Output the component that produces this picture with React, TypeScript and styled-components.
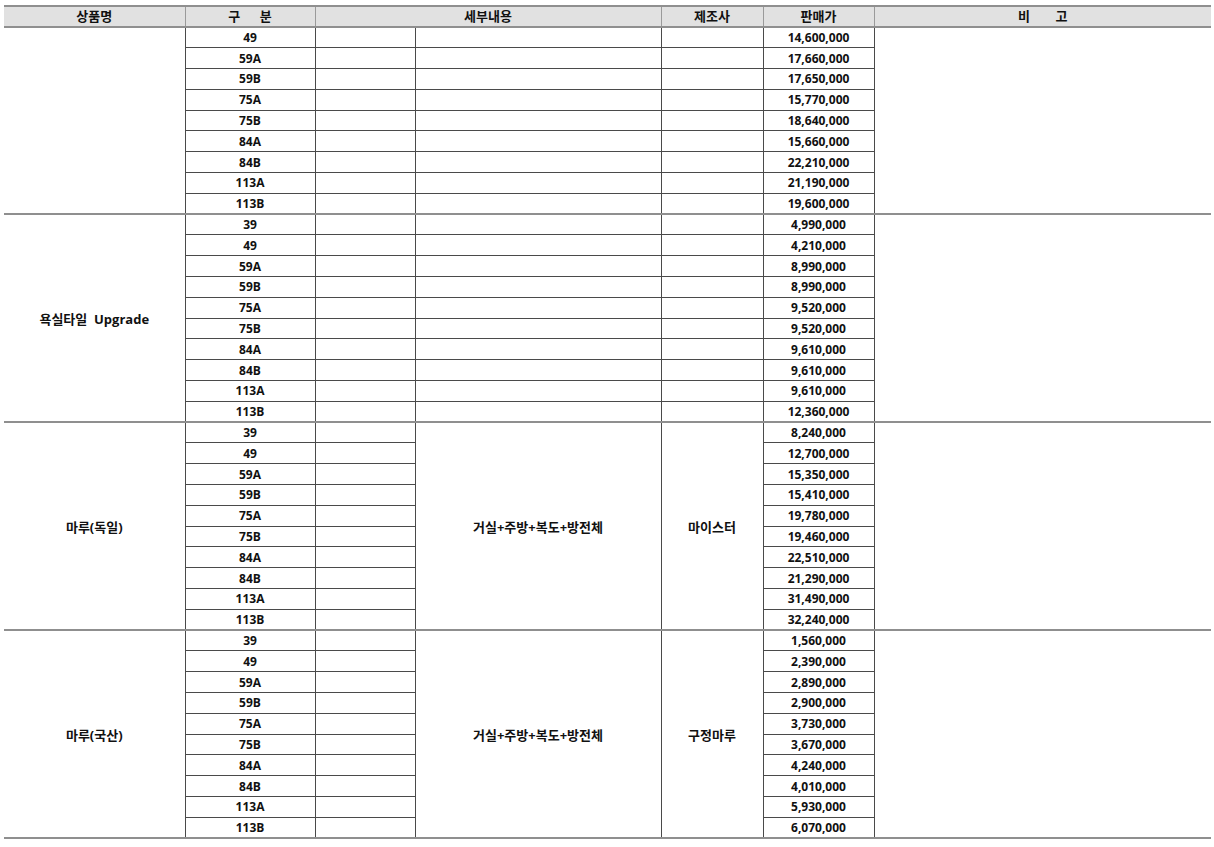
import React from "react";
import styled, { createGlobalStyle } from "styled-components";

const GlobalStyle = createGlobalStyle`
	html, body {
		margin: 0;
		padding: 0;
		background: #fff;
	}
	body {
		font-family: "Open Sans", "Noto Sans CJK KR", sans-serif;
		color: #111;
	}
`;

const Page = styled.div`
	padding: 5px 3px 0 4px;
`;

const PriceTable = styled.table`
	width: 1207px;
	border-collapse: collapse;
	table-layout: fixed;
	font-size: 12px;
	font-weight: 700;
`;

const HeadCell = styled.th<{ $spaced?: number }>`
	height: 19px;
	padding: 0;
	background: #e1e1e1;
	border-top: 2px solid #8f8f8f;
	border-bottom: 2px solid #8f8f8f;
	border-left: 1px solid #9a9a9a;
	font-size: 13px;
	line-height: 1;
	font-weight: 700;
	text-align: center;
	word-spacing: ${(p) => p.$spaced ?? 0}px;
	&:first-child {
		border-left: 0;
	}
`;

const Group = styled.tbody`
	border-bottom: 2px solid #8f8f8f;
`;

const Row = styled.tr`
	height: 20.8px;
`;

const Cell = styled.td<{ $ko?: boolean }>`
	padding: 0;
	text-align: center;
	vertical-align: middle;
	border: 1px solid #4a4a4a;
	white-space: nowrap;
	font-size: ${(p) => (p.$ko ? 13 : 12)}px;
`;

const SideCell = styled(Cell)`
	border-left: 0;
	white-space: pre;
`;

const NoteCell = styled(Cell)`
	border-right: 0;
`;

type Group = {
	name: string;
	detail?: string;
	maker?: string;
	rows: [string, string][];
};

const groups: Group[] = [
	{
		name: "",
		rows: [
			["49", "14,600,000"],
			["59A", "17,660,000"],
			["59B", "17,650,000"],
			["75A", "15,770,000"],
			["75B", "18,640,000"],
			["84A", "15,660,000"],
			["84B", "22,210,000"],
			["113A", "21,190,000"],
			["113B", "19,600,000"],
		],
	},
	{
		name: "욕실타일  Upgrade",
		rows: [
			["39", "4,990,000"],
			["49", "4,210,000"],
			["59A", "8,990,000"],
			["59B", "8,990,000"],
			["75A", "9,520,000"],
			["75B", "9,520,000"],
			["84A", "9,610,000"],
			["84B", "9,610,000"],
			["113A", "9,610,000"],
			["113B", "12,360,000"],
		],
	},
	{
		name: "마루(독일)",
		detail: "거실+주방+복도+방전체",
		maker: "마이스터",
		rows: [
			["39", "8,240,000"],
			["49", "12,700,000"],
			["59A", "15,350,000"],
			["59B", "15,410,000"],
			["75A", "19,780,000"],
			["75B", "19,460,000"],
			["84A", "22,510,000"],
			["84B", "21,290,000"],
			["113A", "31,490,000"],
			["113B", "32,240,000"],
		],
	},
	{
		name: "마루(국산)",
		detail: "거실+주방+복도+방전체",
		maker: "구정마루",
		rows: [
			["39", "1,560,000"],
			["49", "2,390,000"],
			["59A", "2,890,000"],
			["59B", "2,900,000"],
			["75A", "3,730,000"],
			["75B", "3,670,000"],
			["84A", "4,240,000"],
			["84B", "4,010,000"],
			["113A", "5,930,000"],
			["113B", "6,070,000"],
		],
	},
];

const App: React.FC = () => {
	return (
		<Page>
			<GlobalStyle />
			<PriceTable>
				<colgroup>
					<col style={{ width: 181 }} />
					<col style={{ width: 130 }} />
					<col style={{ width: 100 }} />
					<col style={{ width: 246 }} />
					<col style={{ width: 102 }} />
					<col style={{ width: 111 }} />
					<col style={{ width: 337 }} />
				</colgroup>
				<thead>
					<tr>
						<HeadCell>상품명</HeadCell>
						<HeadCell $spaced={16}>구 분</HeadCell>
						<HeadCell colSpan={2}>세부내용</HeadCell>
						<HeadCell>제조사</HeadCell>
						<HeadCell>판매가</HeadCell>
						<HeadCell $spaced={22}>비 고</HeadCell>
					</tr>
				</thead>
				{groups.map((g, gi) => (
					<Group key={gi}>
						{g.rows.map(([size, price], ri) => (
							<Row key={size + ri}>
								{ri === 0 && (
									<SideCell $ko rowSpan={g.rows.length}>
										{g.name}
									</SideCell>
								)}
								<Cell>{size}</Cell>
								<Cell />
								{g.detail ? (
									ri === 0 && (
										<>
											<Cell $ko rowSpan={g.rows.length}>
												{g.detail}
											</Cell>
											<Cell $ko rowSpan={g.rows.length}>
												{g.maker}
											</Cell>
										</>
									)
								) : (
									<>
										<Cell />
										<Cell />
									</>
								)}
								<Cell>{price}</Cell>
								{ri === 0 && <NoteCell rowSpan={g.rows.length} />}
							</Row>
						))}
					</Group>
				))}
			</PriceTable>
		</Page>
	);
};

export default App;
